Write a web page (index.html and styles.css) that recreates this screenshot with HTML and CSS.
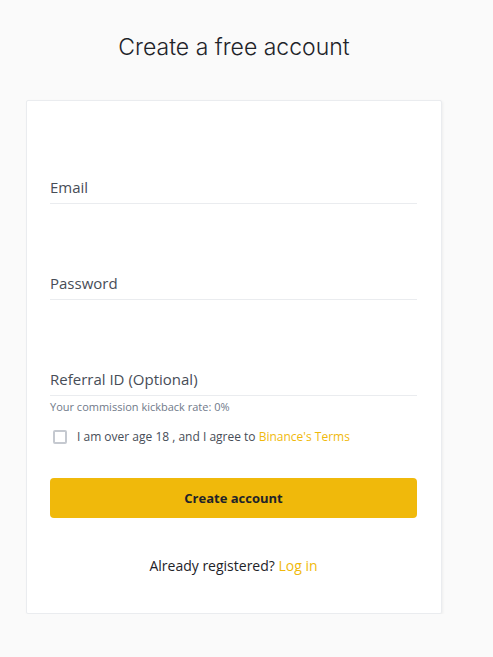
FILE: index.html
```html
<!DOCTYPE html>
<html lang="en">
<head>
    <meta charset="UTF-8">
    <meta name="viewport" content="width=device-width, initial-scale=1.0">
    <title>Create a free account</title>
    <link rel="stylesheet" href="styles.css">
</head>
<body>
    <main class="page">
        <h1 class="title">Create a free account</h1>

        <form class="card">
            <div class="field field-first">
                <input class="field-input" type="email" placeholder="Email">
            </div>
            <div class="field">
                <input class="field-input" type="password" placeholder="Password">
            </div>
            <div class="field">
                <input class="field-input" type="text" placeholder="Referral ID (Optional)">
            </div>
            <p class="hint">Your commission kickback rate: 0%</p>

            <label class="agree">
                <span class="check"></span>
                <span>I am over age 18 , and I agree to <a href="#" class="link">Binance's Terms</a></span>
            </label>

            <button type="button" class="submit">Create account</button>

            <p class="login">Already registered? <a href="#" class="link">Log in</a></p>
        </form>
    </main>
</body>
</html>
```

FILE: styles.css
```css
body {
    margin: 0;
    padding: 0;
    background-color: #fafafa;
    color: #1e2329;
    font-family: "Open Sans", "Noto Sans", Arial, sans-serif;
}
.page {
    width: 416px;
    margin-left: 26px;
    padding-top: 31px;
}
.title {
    margin: 0 0 37px 0;
    font-family: Inter, "Noto Sans", sans-serif;
    font-size: 23px;
    line-height: 32px;
    font-weight: 300;
    text-align: center;
    color: #1e2329;
}
.card {
    display: flex;
    flex-direction: column;
    background-color: #fff;
    border: 1px solid #eaecef;
    border-radius: 2px;
    box-shadow: 1px 1px 3px rgba(0, 0, 0, 0.05);
    padding: 7px 24px 37px 23px;
}
.field {
    padding-top: 63px;
}
.field-input {
    display: block;
    width: 100%;
    box-sizing: border-box;
    height: 33px;
    border: none;
    border-bottom: 1px solid #eaecef;
    padding: 0;
    font-family: inherit;
    font-size: 15px;
    color: #1e2329;
    background: transparent;
    outline: none;
}
.field-input::placeholder {
    color: #474d57;
}
.hint {
    margin: 3px 0 0 0;
    font-size: 11px;
    line-height: 16px;
    color: #707a8a;
}
.agree {
    display: flex;
    align-items: center;
    gap: 10px;
    margin-top: 12px;
    padding-left: 3px;
    font-size: 12px;
    line-height: 20px;
    color: #474d57;
}
.check {
    width: 10px;
    height: 10px;
    border: 2px solid #c5c9d0;
    border-radius: 2px;
}
.link {
    color: #f0b90b;
    text-decoration: none;
}
.submit {
    margin-top: 31px;
    height: 40px;
    border: none;
    border-radius: 4px;
    background-color: #f0b90b;
    color: #1e2329;
    font-family: inherit;
    font-size: 13px;
    font-weight: 700;
    cursor: pointer;
}
.login {
    margin: 38px 0 0 0;
    text-align: center;
    font-size: 14px;
    line-height: 20px;
    color: #1e2329;
}
```
